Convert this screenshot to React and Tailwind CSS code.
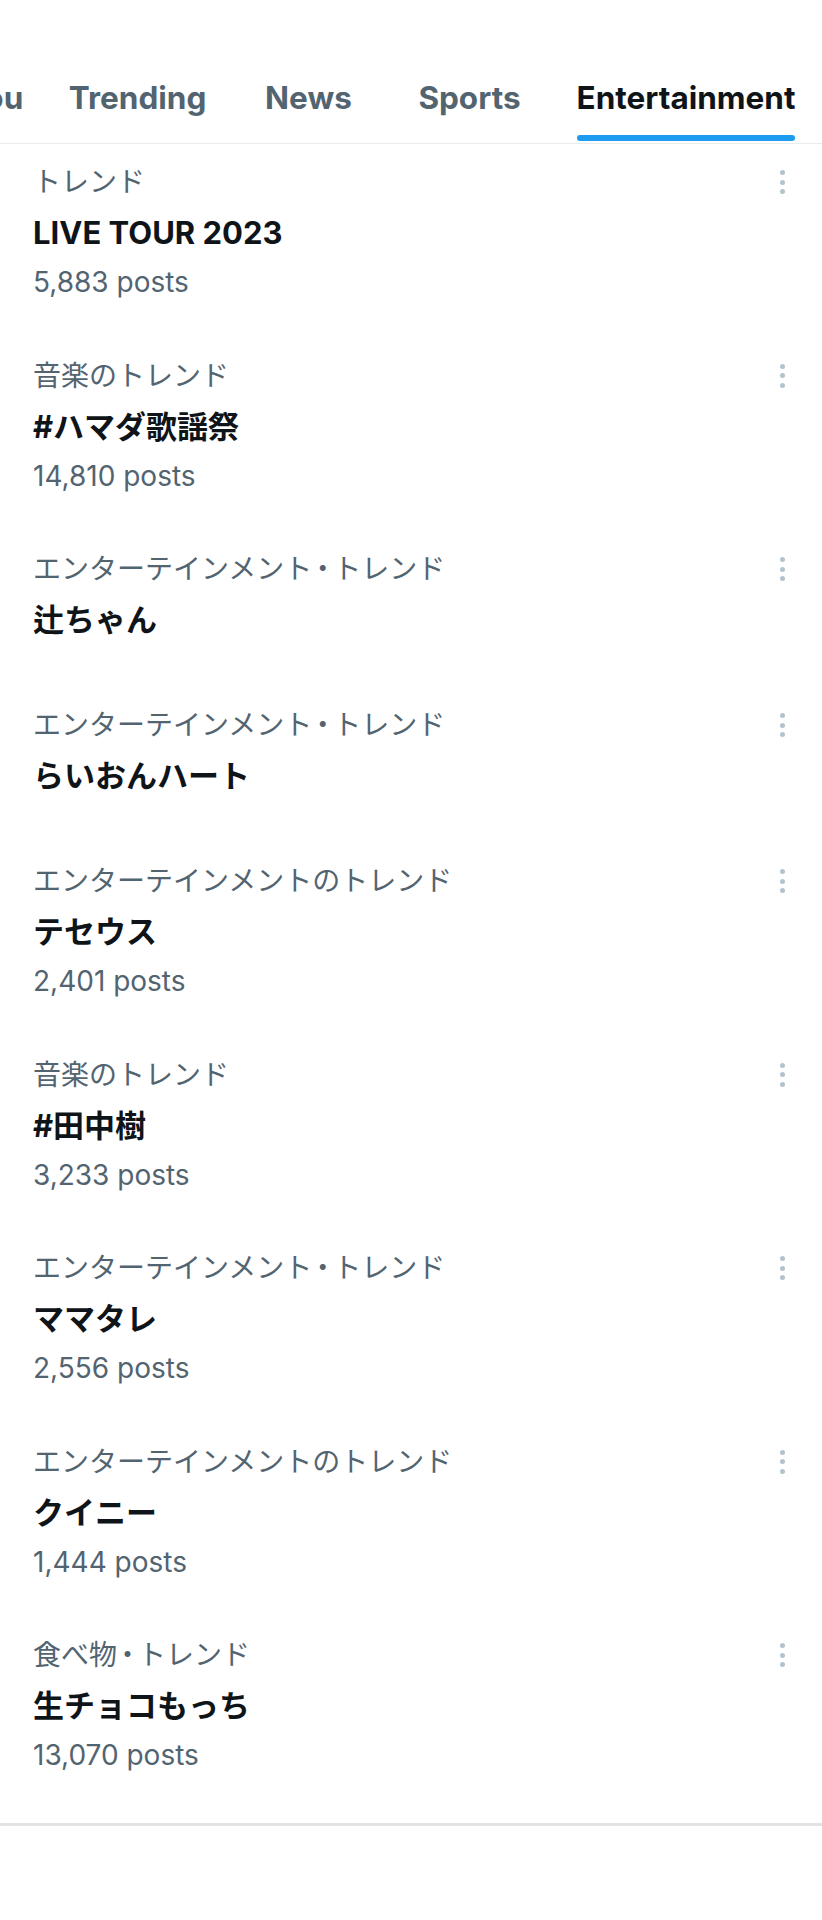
import React from 'react';

const tabs = [
  { label: 'For you', width: 'w-[168px] -ml-[118px]' },
  { label: 'Trending', width: 'w-[175px]' },
  { label: 'News', width: 'w-[167px]' },
  { label: 'Sports', width: 'w-[155px]' },
  { label: 'Entertainment', width: 'w-[278px]', active: true },
];

const trends = [
  { category: 'トレンド', title: 'LIVE TOUR 2023', posts: '5,883 posts' },
  { category: '音楽のトレンド', title: '#ハマダ歌謡祭', posts: '14,810 posts' },
  { category: 'エンターテインメント・トレンド', title: '辻ちゃん' },
  { category: 'エンターテインメント・トレンド', title: 'らいおんハート' },
  { category: 'エンターテインメントのトレンド', title: 'テセウス', posts: '2,401 posts' },
  { category: '音楽のトレンド', title: '#田中樹', posts: '3,233 posts' },
  { category: 'エンターテインメント・トレンド', title: 'ママタレ', posts: '2,556 posts' },
  { category: 'エンターテインメントのトレンド', title: 'クイニー', posts: '1,444 posts' },
  { category: '食べ物・トレンド', title: '生チョコもっち', posts: '13,070 posts' },
];

function Category({ text }) {
  // the middle dot sits tighter than a full-width glyph in the reference
  const parts = text.split('・');
  if (parts.length === 1) return text;
  return (
    <>
      {parts[0]}
      <span className="-mx-[3.5px]">・</span>
      {parts[1]}
    </>
  );
}

function Kebab() {
  return (
    <div className="flex flex-col gap-[4.5px]">
      <span className="w-[5px] h-[5px] rounded-full bg-[#b3c3cd]"></span>
      <span className="w-[5px] h-[5px] rounded-full bg-[#b3c3cd]"></span>
      <span className="w-[5px] h-[5px] rounded-full bg-[#b3c3cd]"></span>
    </div>
  );
}

export default function App() {
  return (
    <div className="w-[822px] min-h-[1920px] bg-white font-[Inter,'Noto_Sans_CJK_JP',sans-serif] overflow-hidden">
      {/* Tabs */}
      <div className="h-[144px] border-b border-[#e6ecf0] overflow-hidden">
        <div className="flex pt-[78px]">
          {tabs.map((t) => (
            <div key={t.label} className={`${t.width} shrink-0 flex justify-center`}>
              <div className="inline-flex flex-col">
                <span
                  className={`text-[31.5px] leading-[40px] font-bold whitespace-nowrap ${
                    t.active ? 'text-[#0f1419]' : 'text-[#536471]'
                  }`}
                >
                  {t.label}
                </span>
                {t.active && <span className="mt-[17px] h-[6px] rounded-full bg-[#1d9bf0]"></span>}
              </div>
            </div>
          ))}
        </div>
      </div>

      {/* Trend list */}
      <div className="flex flex-col">
        {trends.map((t, i) => (
          <div
            key={i}
            className={`flex pl-[33px] pr-[37px] pt-[12px] ${t.posts ? 'pb-[31.5px]' : 'pb-[42px]'}`}
          >
            <div className="flex-1 flex flex-col">
              <div className="text-[28px] leading-[52px] text-[#536471]">
                <Category text={t.category} />
              </div>
              <div className="text-[31px] leading-[50px] font-bold text-[#0f1419]">{t.title}</div>
              {t.posts && <div className="text-[28px] leading-[48px] text-[#536471]">{t.posts}</div>}
            </div>
            <div className="h-[52px] flex items-center">
              <Kebab />
            </div>
          </div>
        ))}
      </div>

      <div className="mt-[12.5px] h-[3px] bg-[#e3e3e3]"></div>
    </div>
  );
}
